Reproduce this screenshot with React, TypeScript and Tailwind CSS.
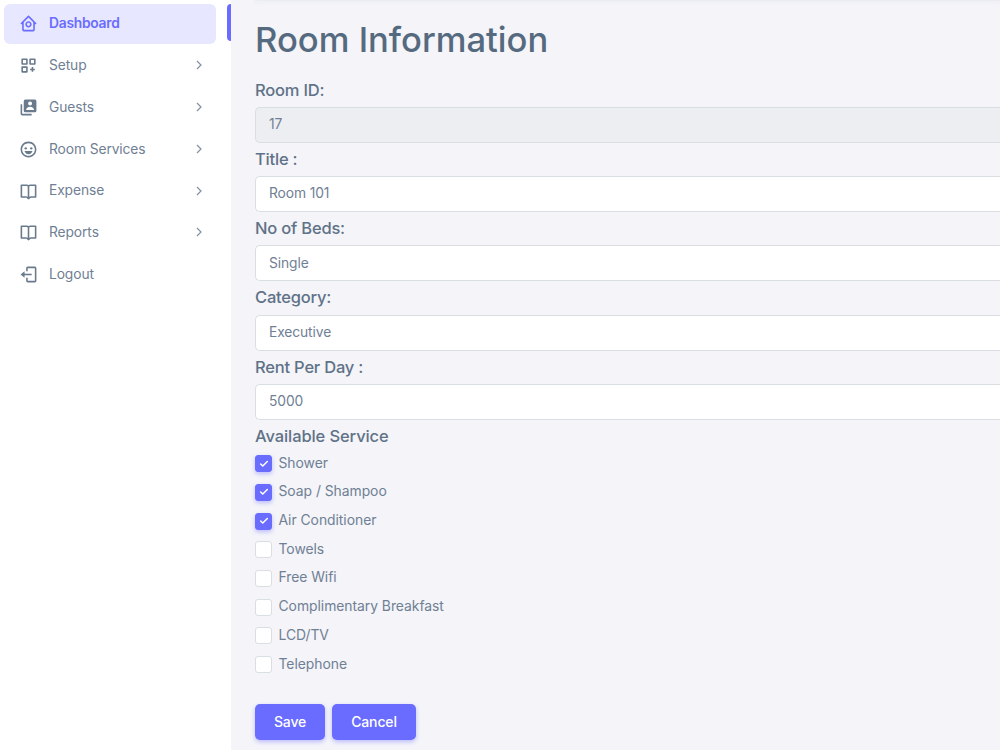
import {
  BiBookOpen,
  BiCustomize,
  BiHappy,
  BiHomeCircle,
  BiSolidUserAccount,
} from "react-icons/bi";
import { Check } from "lucide-react";

function LogoutIcon({ size = 19, className = "" }: { size?: number; className?: string }) {
  return (
    <svg width={size} height={size} viewBox="0 0 24 24" fill="none" stroke="currentColor" strokeWidth="2" className={className}>
      <path d="M10 8V4a1 1 0 0 1 1-1h9a1 1 0 0 1 1 1v16a1 1 0 0 1-1 1h-9a1 1 0 0 1-1-1v-4" />
      <path d="M6 12h10" />
      <path d="M2 12l5-4v8z" fill="currentColor" stroke="none" />
    </svg>
  );
}

const menu = [
  { label: "Dashboard", icon: BiHomeCircle, active: true, sub: false },
  { label: "Setup", icon: BiCustomize, sub: true },
  { label: "Guests", icon: BiSolidUserAccount, sub: true },
  { label: "Room Services", icon: BiHappy, sub: true },
  { label: "Expense", icon: BiBookOpen, sub: true },
  { label: "Reports", icon: BiBookOpen, sub: true },
  { label: "Logout", icon: LogoutIcon, sub: false },
];

const fields = [
  { label: "Room ID:", value: "17", readOnly: true },
  { label: "Title :", value: "Room 101" },
  { label: "No of Beds:", value: "Single" },
  { label: "Category:", value: "Executive" },
  { label: "Rent Per Day :", value: "5000" },
];

const services = [
  { label: "Shower", checked: true },
  { label: "Soap / Shampoo", checked: true },
  { label: "Air Conditioner", checked: true },
  { label: "Towels", checked: false },
  { label: "Free Wifi", checked: false },
  { label: "Complimentary Breakfast", checked: false },
  { label: "LCD/TV", checked: false },
  { label: "Telephone", checked: false },
];

function Sidebar() {
  return (
    <aside className="flex w-[231px] shrink-0 bg-white pt-1 pl-1">
      <ul className="flex w-[212px] flex-col gap-[2.2px]">
        {menu.map(({ label, icon: Icon, active, sub }) => (
          <li
            key={label}
            className={`flex h-[39.5px] items-center rounded-md pr-[13px] pl-[15px] text-[13.8px] ${
              active ? "bg-[#e7e7ff] pb-px font-semibold tracking-[-0.25px] text-[#696cff]" : "tracking-[-0.1px] text-[#697a8d]"
            }`}
          >
            <Icon size={19} className="mt-px mr-[11px]" />
            <span className={`flex-1 ${active ? "" : "pt-[0.6px] text-[#708094]"}`}>{label}</span>
            {sub && (
              <svg width="8" height="10" viewBox="0 0 8 10" fill="none" className="text-[#8391a2]">
                <path d="M2 1l4 4-4 4" stroke="currentColor" strokeWidth="1.2" />
              </svg>
            )}
          </li>
        ))}
      </ul>
      <span className="ml-auto h-[37px] w-1 rounded-l bg-[#696cff]" />
    </aside>
  );
}

export default function App() {
  return (
    <div className="flex h-[750px] w-[1000px] overflow-hidden bg-[#f4f4f9] font-['Inter',sans-serif] text-[#708094]">
      <Sidebar />
      <main className="min-w-0 flex-1 pl-6">
        {/* bottom edge of the navbar */}
        <div className="h-px bg-[#e9edf1] shadow-[0_1px_4px_rgba(67,89,113,0.12)]" />
        <h1 className="mt-[16.4px] h-[44px] text-[34.6px] leading-[44px] font-[450] whitespace-nowrap text-[#566a7f]">Room Information</h1>

        <form className="mt-[16.4px]">
          {fields.map((f) => (
            <div key={f.label} className="h-[69.2px]">
              <h5 className="h-[29.2px] text-[16.5px] leading-[24px] font-medium tracking-[-0.2px] text-[#5f7287]">{f.label}</h5>
              <div
                className={`flex h-[36px] items-center rounded-l-[5px] border border-r-0 border-[#d9dee3] pb-px pl-[13px] text-[13.8px] tracking-[-0.1px] ${
                  f.readOnly ? "bg-[#eceef1]" : "bg-white"
                }`}
              >
                {f.value}
              </div>
            </div>
          ))}

          <h5 className="text-[16.5px] leading-[24px] font-medium tracking-[-0.1px] text-[#5f7287]">Available Service</h5>
          <div className="mt-[0.7px]">
            {services.map((s) => (
              <label key={s.label} className="flex h-[28.7px] items-center">
                <span
                  className={`mt-[2px] mr-[6.5px] flex size-[17px] items-center justify-center rounded-[3px] border ${
                    s.checked
                      ? "border-[#696cff] bg-[#696cff] shadow-[0_2px_4px_rgba(105,108,255,0.4)]"
                      : "border-[#d9dee3] bg-white"
                  }`}
                >
                  {s.checked && <Check size={10} strokeWidth={3.6} className="shrink-0 text-white" />}
                </span>
                <span className="pt-[0.8px] text-[13.9px] tracking-[-0.04px]">{s.label}</span>
              </label>
            ))}
          </div>

          <div className="mt-[26.5px] flex gap-[7px] text-[14px] font-medium tracking-[-0.15px] text-white">
            <button
              type="button"
              className="h-[36px] w-[70px] rounded-[5px] bg-[#696cff] pb-px shadow-[0_2px_4px_rgba(105,108,255,0.4)]"
            >
              Save
            </button>
            <button
              type="button"
              className="h-[36px] w-[84px] rounded-[5px] bg-[#696cff] pb-px shadow-[0_2px_4px_rgba(105,108,255,0.4)]"
            >
              Cancel
            </button>
          </div>
        </form>
      </main>
    </div>
  );
}
